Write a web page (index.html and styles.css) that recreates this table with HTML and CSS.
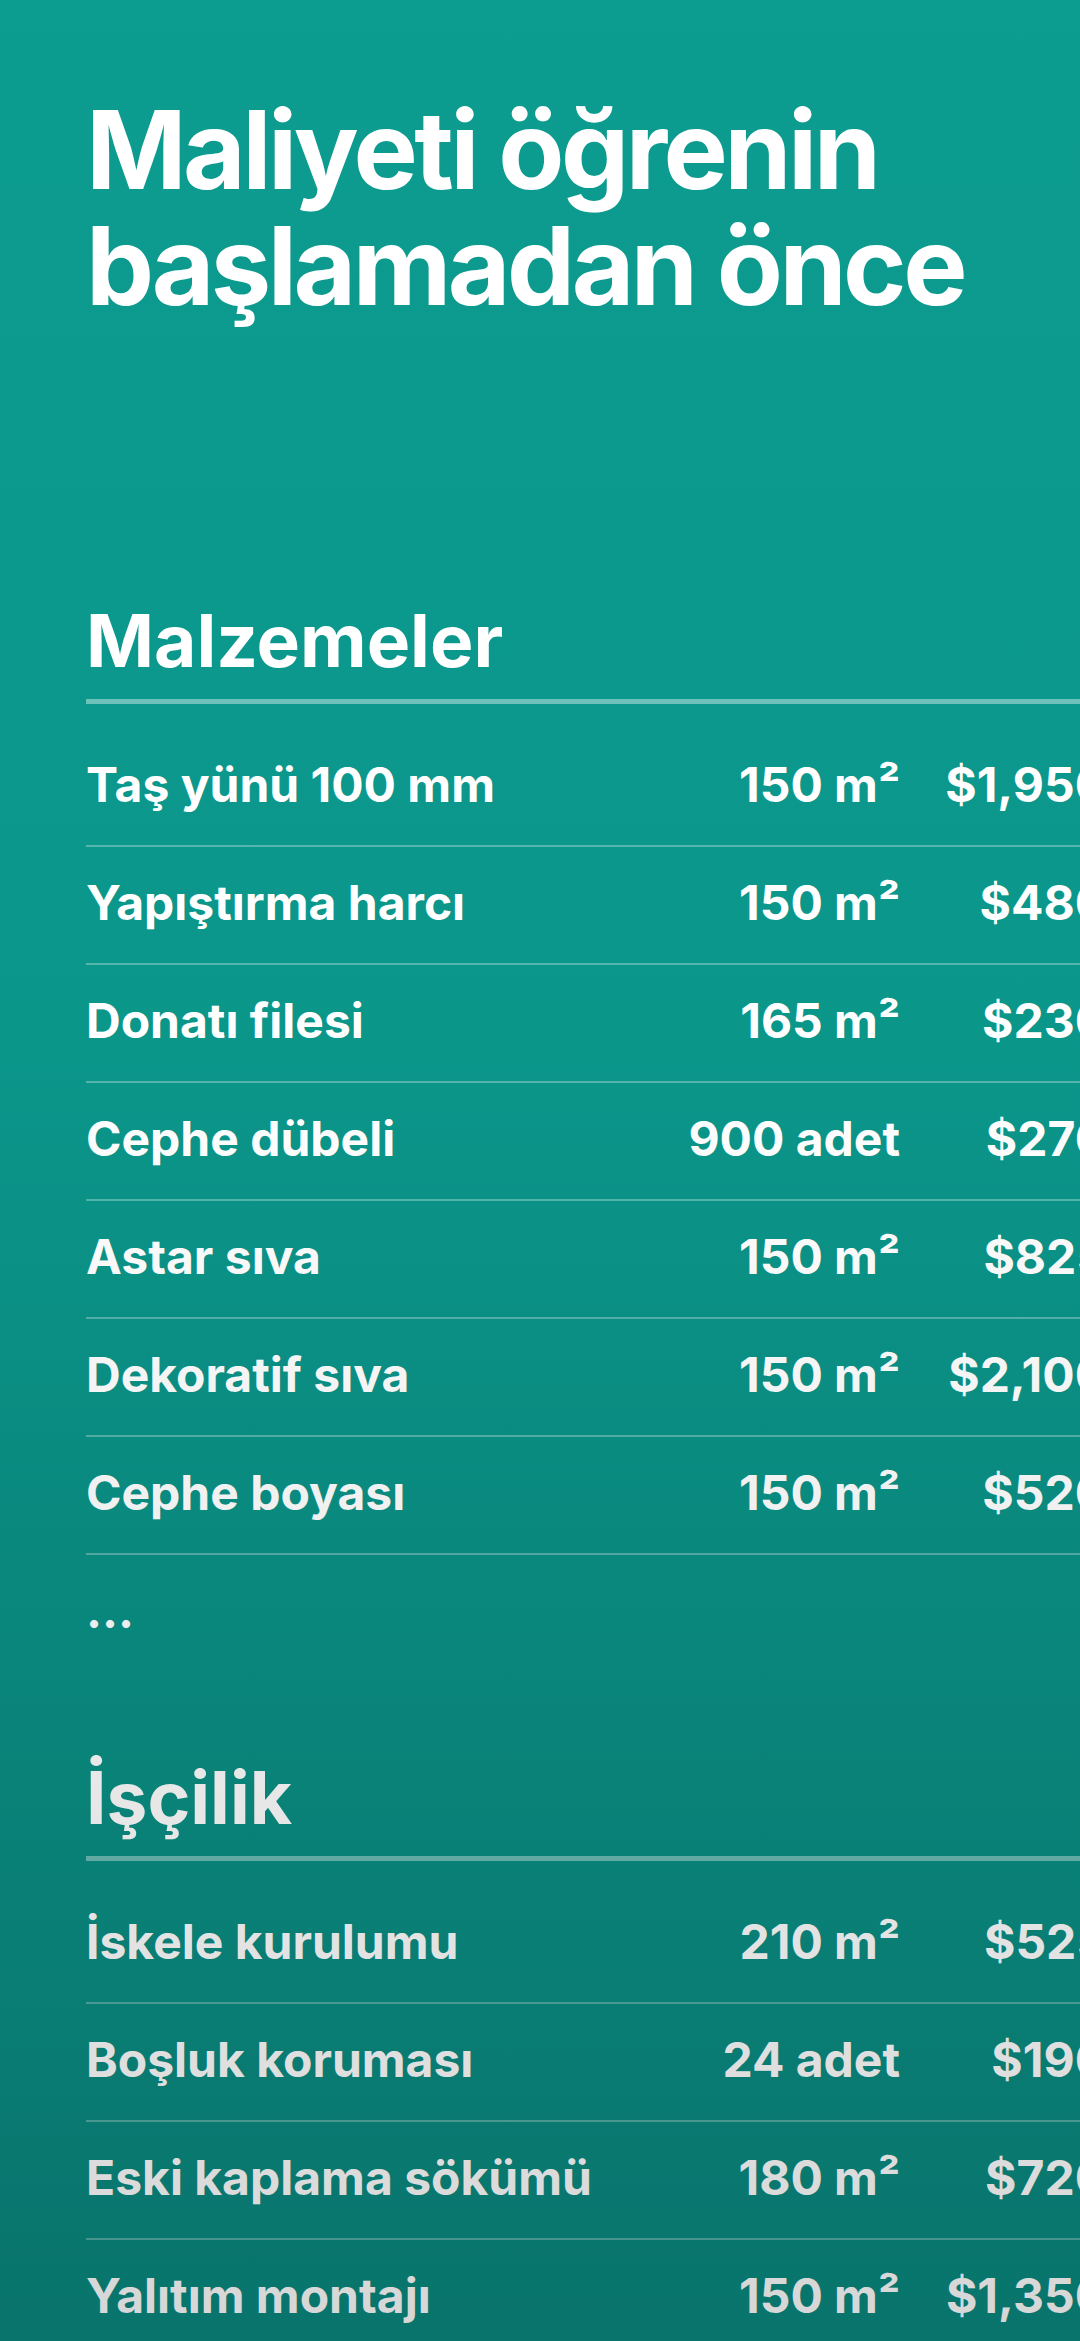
FILE: index.html
```html
<!DOCTYPE html>
<html lang="tr">
<head>
    <meta charset="UTF-8">
    <meta name="viewport" content="width=device-width, initial-scale=1.0">
    <title>Maliyet</title>
    <link rel="stylesheet" href="styles.css">
</head>
<body>
    <main class="page">
        <h1 class="title">Maliyeti öğrenin<br>başlamadan önce</h1>

        <section class="block block-first">
            <h2 class="block-title">Malzemeler</h2>
            <ul class="cost-list">
                <li class="cost-row"><span class="name">Taş yünü 100 mm</span><span class="qty">150 m²</span><span class="price">$1,950</span></li>
                <li class="cost-row"><span class="name">Yapıştırma harcı</span><span class="qty">150 m²</span><span class="price">$480</span></li>
                <li class="cost-row"><span class="name">Donatı filesi</span><span class="qty">165 m²</span><span class="price">$230</span></li>
                <li class="cost-row"><span class="name">Cephe dübeli</span><span class="qty">900 adet</span><span class="price">$270</span></li>
                <li class="cost-row"><span class="name">Astar sıva</span><span class="qty">150 m²</span><span class="price">$825</span></li>
                <li class="cost-row"><span class="name">Dekoratif sıva</span><span class="qty">150 m²</span><span class="price">$2,100</span></li>
                <li class="cost-row"><span class="name">Cephe boyası</span><span class="qty">150 m²</span><span class="price">$520</span></li>
                <li class="cost-row more"><span class="name">...</span></li>
            </ul>
        </section>

        <section class="block">
            <h2 class="block-title">İşçilik</h2>
            <ul class="cost-list">
                <li class="cost-row"><span class="name">İskele kurulumu</span><span class="qty">210 m²</span><span class="price">$525</span></li>
                <li class="cost-row"><span class="name">Boşluk koruması</span><span class="qty">24 adet</span><span class="price">$190</span></li>
                <li class="cost-row"><span class="name">Eski kaplama sökümü</span><span class="qty">180 m²</span><span class="price">$720</span></li>
                <li class="cost-row"><span class="name">Yalıtım montajı</span><span class="qty">150 m²</span><span class="price">$1,350</span></li>
            </ul>
        </section>
    </main>
    <div class="shade"></div>
</body>
</html>
```

FILE: styles.css
```css
/* Genel */
* {
    box-sizing: border-box;
}

body {
    margin: 0;
    width: 1080px;
    height: 2341px;
    overflow: hidden;
    position: relative;
    background: linear-gradient(to bottom, #0d9c90 0%, #0b968a 45%, #0a8a80 100%);
    font-family: Inter, "Noto Sans", "Liberation Sans", sans-serif;
    color: #fff;
}

.page {
    padding: 92px 0 0 86px;
}

/* Başlık */
.title {
    margin: 0;
    font-size: 108px;
    line-height: 116px;
    font-weight: 700;
    letter-spacing: -3.5px;
}

/* Bölümler */
.block {
    width: 1021px;
    margin-top: 83px;
}

.block-first {
    margin-top: 273px;
}

.block-title {
    margin: 0;
    font-size: 73px;
    line-height: 88px;
    font-weight: 700;
    letter-spacing: 0;
    padding-bottom: 14px;
    border-bottom: 5px solid rgba(255, 255, 255, 0.4);
}

.cost-list {
    list-style: none;
    margin: 25px 0 0;
    padding: 0;
}

.cost-row {
    display: grid;
    grid-template-columns: 1fr auto 182px;
    column-gap: 25px;
    font-size: 48px;
    line-height: 58px;
    font-weight: 700;
    padding: 27px 0 31px;
    border-bottom: 2px solid rgba(255, 255, 255, 0.3);
}

.cost-row.more {
    border-bottom: none;
}

.qty,
.price {
    text-align: right;
    white-space: nowrap;
}

/* Alt kısım kararması */
.shade {
    position: absolute;
    left: 0;
    right: 0;
    top: 1050px;
    bottom: 0;
    background: linear-gradient(to bottom, rgba(0, 0, 0, 0), rgba(0, 0, 0, 0.16));
    pointer-events: none;
}
```
